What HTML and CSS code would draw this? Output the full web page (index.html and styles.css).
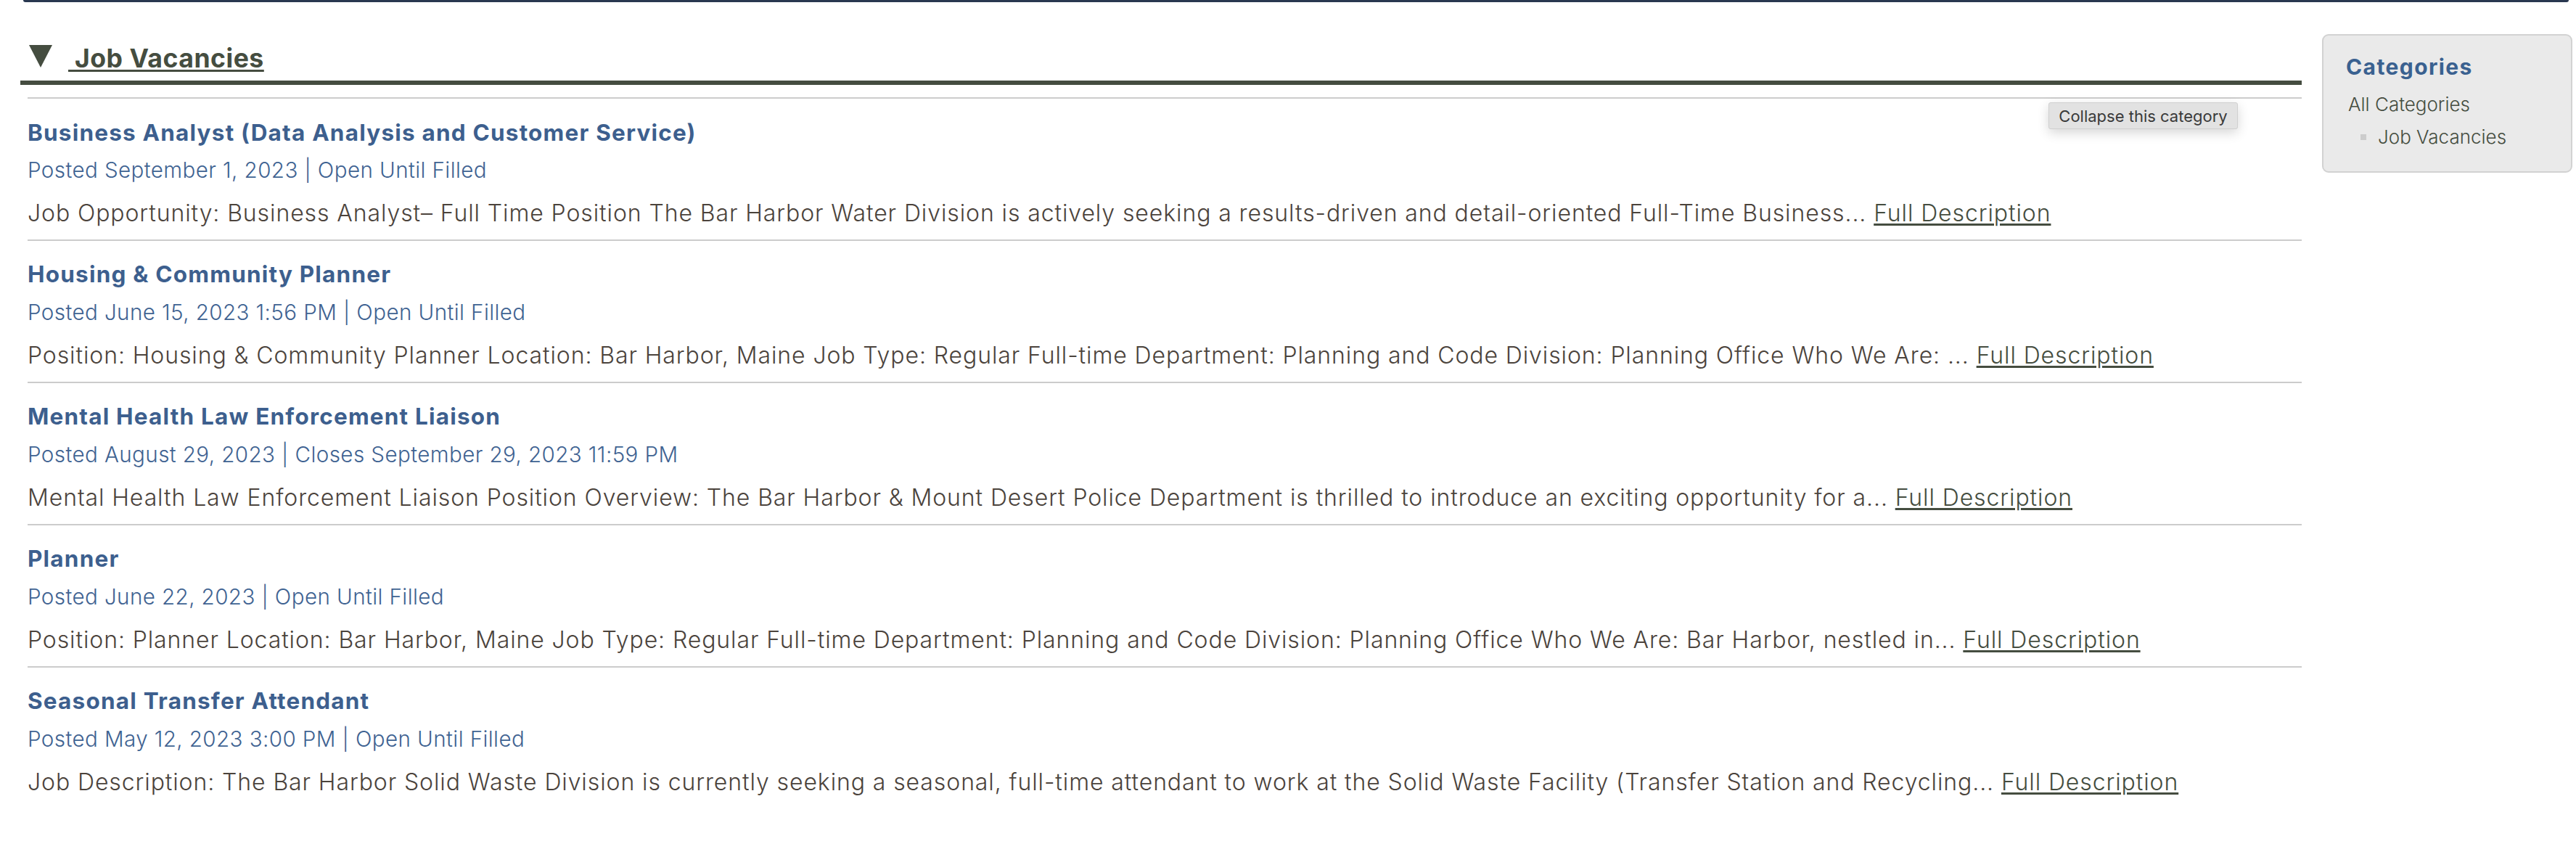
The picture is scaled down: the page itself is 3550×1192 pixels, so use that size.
FILE: index.html
```html
<!DOCTYPE html>
<html lang="en">
<head>
<meta charset="utf-8">
<title>Job Vacancies</title>
<link rel="stylesheet" href="styles.css">
</head>
<body>
<div class="topbar"></div>
<div class="layout">
  <main class="main">
    <h2 class="cat-heading">
      <svg class="cat-toggle" width="32" height="31" viewBox="0 0 32 31" aria-hidden="true"><polygon points="0,0 32,0 16,31" fill="#454d40"/></svg><a class="cat-link" href="#">&nbsp;Job Vacancies</a>
    </h2>
    <ul class="jobs">
      <li class="job">
        <a class="job-title" href="#">Business Analyst (Data Analysis and Customer Service)</a>
        <div class="job-meta">Posted September 1, 2023 | Open Until Filled</div>
        <p class="job-desc">Job Opportunity: Business Analyst– Full Time Position The Bar Harbor Water Division is actively seeking a results-driven and detail-oriented Full-Time Business... <a class="more" href="#">Full Description</a></p>
      </li>
      <li class="job">
        <a class="job-title" href="#">Housing &amp; Community Planner</a>
        <div class="job-meta">Posted June 15, 2023 1:56 PM | Open Until Filled</div>
        <p class="job-desc">Position: Housing &amp; Community Planner Location: Bar Harbor, Maine Job Type: Regular Full-time Department: Planning and Code Division: Planning Office Who We Are: ... <a class="more" href="#">Full Description</a></p>
      </li>
      <li class="job">
        <a class="job-title" href="#">Mental Health Law Enforcement Liaison</a>
        <div class="job-meta">Posted August 29, 2023 | Closes September 29, 2023 11:59 PM</div>
        <p class="job-desc">Mental Health Law Enforcement Liaison Position Overview: The Bar Harbor &amp; Mount Desert Police Department is thrilled to introduce an exciting opportunity for a... <a class="more" href="#">Full Description</a></p>
      </li>
      <li class="job">
        <a class="job-title" href="#">Planner</a>
        <div class="job-meta">Posted June 22, 2023 | Open Until Filled</div>
        <p class="job-desc">Position: Planner Location: Bar Harbor, Maine Job Type: Regular Full-time Department: Planning and Code Division: Planning Office Who We Are: Bar Harbor, nestled in... <a class="more" href="#">Full Description</a></p>
      </li>
      <li class="job">
        <a class="job-title" href="#">Seasonal Transfer Attendant</a>
        <div class="job-meta">Posted May 12, 2023 3:00 PM | Open Until Filled</div>
        <p class="job-desc">Job Description: The Bar Harbor Solid Waste Division is currently seeking a seasonal, full-time attendant to work at the Solid Waste Facility (Transfer Station and Recycling... <a class="more" href="#">Full Description</a></p>
      </li>
    </ul>
  </main>
  <aside class="sidebar">
    <h3 class="side-title">Categories</h3>
    <a class="side-all" href="#">All Categories</a>
    <ul class="side-list">
      <li class="side-item"><a href="#">Job Vacancies</a></li>
    </ul>
  </aside>
</div>
<div class="tooltip">Collapse this category</div>
</body>
</html>
```
FILE: styles.css
```css
* { box-sizing: border-box; }

html, body {
  margin: 0;
  padding: 0;
  background: #ffffff;
}

body {
  font-family: "Inter", "Open Sans", sans-serif;
  color: #4b443d;
  position: relative;
  min-height: 1192px;
}

a { text-decoration: none; }

.topbar {
  height: 3px;
  margin: 0 10px 0 32px;
  background: #293850;
  border-radius: 0 0 5px 5px;
}

.layout {
  display: flex;
  align-items: flex-start;
  gap: 28px;
  padding: 0 5px 0 28px;
}

.main {
  flex: 1;
  min-width: 0;
}

/* Category heading */
.cat-heading {
  margin: 56px 0 0;
  padding: 0 0 8px 12px;
  border-bottom: 6px solid #454d40;
  font-size: 35.6px;
  line-height: 44px;
  font-weight: 700;
  letter-spacing: 0.5px;
  color: #454d40;
}

.cat-toggle {
  display: inline-block;
  vertical-align: baseline;
  margin-right: 22px;
}

.cat-link {
  color: #454d40;
  text-decoration: underline;
  text-decoration-thickness: 3px;
  text-underline-offset: 3px;
}

/* Job list */
.jobs {
  list-style: none;
  margin: 17px 0 0 10px;
  padding: 0;
}

.job {
  border-top: 2px solid #cccccc;
  padding: 27.5px 0 15.65px;
}

.job-title {
  display: block;
  font-size: 31.5px;
  line-height: 38px;
  font-weight: 700;
  letter-spacing: 1.2px;
  color: #3d5f8e;
}

.job-meta {
  margin-top: 14.7px;
  font-size: 29.6px;
  line-height: 36px;
  font-weight: 300;
  letter-spacing: 0.4px;
  color: #3f6392;
}

.job-desc {
  margin: 22.15px 0 0;
  font-size: 32px;
  line-height: 40px;
  font-weight: 300;
  letter-spacing: 0.9px;
  color: #4b433c;
  white-space: nowrap;
}

.more {
  color: #454d40;
  text-decoration: underline;
  text-decoration-thickness: 3px;
  text-underline-offset: 3px;
}

/* Sidebar */
.sidebar {
  width: 345px;
  flex: none;
  margin-top: 44px;
  padding: 24.8px 20px 31.45px 31px;
  background: #eaeaea;
  border: 2px solid #d2d2d2;
  border-radius: 9px;
}

.side-title {
  margin: 0;
  font-size: 30px;
  line-height: 36px;
  font-weight: 700;
  letter-spacing: 1.4px;
  color: #3a6190;
}

.side-all {
  display: block;
  margin: 17.75px 0 0 3px;
  font-size: 26px;
  line-height: 32px;
  font-weight: 300;
  color: #454d40;
}

.side-list {
  list-style: none;
  margin: 13px 0 0;
  padding: 0 0 0 20px;
}

.side-item {
  display: flex;
  align-items: center;
  gap: 16px;
  font-size: 26px;
  line-height: 32px;
  font-weight: 300;
}

.side-item::before {
  content: "";
  width: 8px;
  height: 8px;
  background: #cccccc;
  flex: none;
}

.side-item a {
  color: #454d40;
}

/* Tooltip overlay */
.tooltip {
  position: absolute;
  left: 2823px;
  top: 141px;
  width: 261px;
  height: 37px;
  display: flex;
  align-items: center;
  justify-content: center;
  background: #e2e2e2;
  border: 1px solid #d0d0d0;
  border-radius: 3px;
  box-shadow: 0 5px 16px rgba(0, 0, 0, 0.16);
  font-family: "Inter", "Liberation Sans", sans-serif;
  font-size: 22px;
  color: #3a3a3a;
}
```
